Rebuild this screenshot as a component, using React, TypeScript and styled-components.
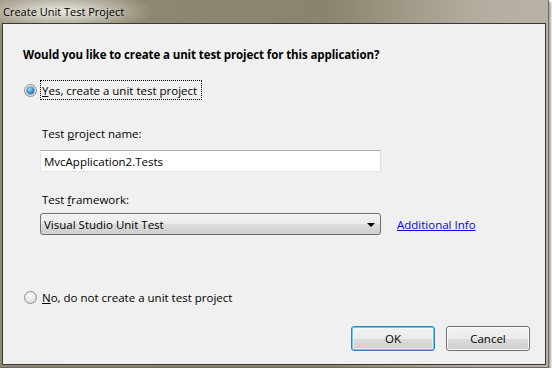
import React from 'react'
import styled, { createGlobalStyle } from 'styled-components'

const GlobalStyle = createGlobalStyle`
  html, body {
    margin: 0;
    padding: 0;
    background: #ffffff;
  }
  body {
    font-family: "Open Sans", "Noto Sans", sans-serif;
    font-size: 11.5px;
    color: #000;
  }
`

const Window = styled.div`
  width: 548px;
  height: 367px;
  display: flex;
  flex-direction: column;
  background:
    radial-gradient(ellipse 95px 22px at 60px 11px, rgba(236, 234, 226, 0.95), rgba(236, 234, 226, 0) 100%),
    linear-gradient(90deg, #8f8872 0%, #8a836d 60%, #a39d8c 76%, #b3ae9f 88%, #b7b2a5 100%);
  border-right: 1px solid #6e6a60;
  border-bottom: 1px solid #6e6a60;
  box-shadow: 2px 2px 2px rgba(0, 0, 0, 0.35);
`

const TitleBar = styled.div`
  height: 23px;
  display: flex;
  align-items: center;
  padding-left: 3px;
  flex-shrink: 0;
`

const TitleText = styled.span`
  font-size: 11px;
  color: #000;
  text-shadow: 0 0 6px rgba(255, 255, 255, 0.8);
`

const Client = styled.div`
  margin: 0 2px 0 2px;
  height: 342px;
  box-sizing: border-box;
  border: 1px solid #3a3a36;
  background: #f0f0f0;
  display: flex;
  flex-direction: column;
  padding: 23px 15px 0 20px;
`

const Heading = styled.div`
  font-weight: 700;
  height: 16px;
  line-height: 16px;
  letter-spacing: -0.1px;
`

const RadioRow = styled.div<{ $gap: number }>`
  display: flex;
  align-items: center;
  height: 20px;
  margin-top: ${(p) => p.$gap}px;
  padding-left: 1px;
`

const RadioDot = styled.span<{ $checked?: boolean }>`
  position: relative;
  width: 13px;
  height: 13px;
  box-sizing: border-box;
  border-radius: 50%;
  border: 1px solid #8e8f8f;
  background: radial-gradient(circle at 40% 35%, #fbfbfb 0%, #e4e4e4 60%, #cfcfcf 100%);
  flex-shrink: 0;
  &::after {
    content: '';
    display: ${(p) => (p.$checked ? 'block' : 'none')};
    position: absolute;
    left: 2px;
    top: 2px;
    width: 7px;
    height: 7px;
    border-radius: 50%;
    background: radial-gradient(circle at 40% 35%, #b6e4fb 0%, #3a9bd8 45%, #135b93 100%);
    box-shadow: 0 0 0 0.5px #1c5180;
  }
`

const RadioLabel = styled.span<{ $focused?: boolean }>`
  margin-left: 3px;
  height: 20px;
  box-sizing: border-box;
  display: flex;
  align-items: center;
  padding: 0 4px 0 1px;
  border: 1px dotted ${(p) => (p.$focused ? '#000' : 'transparent')};
`

const Accel = styled.span`
  text-decoration: underline;
`

const Section = styled.div`
  padding-left: 17px;
  display: flex;
  flex-direction: column;
`

const FieldLabel = styled.div<{ $gap: number }>`
  height: 16px;
  line-height: 16px;
  margin-top: ${(p) => p.$gap}px;
  padding-left: 2px;
`

const TextBox = styled.div`
  margin-top: 8px;
  width: 341px;
  height: 22px;
  box-sizing: border-box;
  background: #fff;
  border: 1px solid #e2e3ea;
  border-top-color: #abadb3;
  display: flex;
  align-items: center;
  padding-left: 3px;
`

const SelectRow = styled.div`
  margin-top: 5px;
  display: flex;
  align-items: center;
`

const DropDown = styled.div`
  width: 341px;
  height: 22px;
  box-sizing: border-box;
  border: 1px solid #707070;
  border-radius: 3px;
  background: linear-gradient(#f2f2f2 0%, #ebebeb 50%, #dddddd 51%, #cfcfcf 100%);
  display: flex;
  align-items: center;
  justify-content: space-between;
  padding: 0 5px 0 3px;
`

const Arrow = styled.span`
  width: 0;
  height: 0;
  border-left: 4px solid transparent;
  border-right: 4px solid transparent;
  border-top: 4px solid #000;
  margin-top: 2px;
`

const InfoLink = styled.a`
  margin-left: 16px;
  color: #0000ff;
  text-decoration: underline;
  cursor: pointer;
`

const Spacer = styled.div`
  flex: 1;
`

const ButtonRow = styled.div`
  display: flex;
  justify-content: flex-end;
  gap: 11px;
  margin-bottom: 13px;
`

const Button = styled.button<{ $default?: boolean }>`
  width: 84px;
  height: 25px;
  box-sizing: border-box;
  font-family: inherit;
  font-size: inherit;
  color: #000;
  border-radius: 3px;
  border: 1px solid ${(p) => (p.$default ? '#3c7fb1' : '#707070')};
  background: linear-gradient(#f2f2f2 0%, #ebebeb 50%, #dddddd 51%, #cfcfcf 100%);
  box-shadow: ${(p) =>
    p.$default ? 'inset 0 0 0 1px #48d8f8, inset 0 0 0 2px rgba(255,255,255,0.5)' : 'inset 0 0 0 1px #fcfcfc'};
  padding: 0;
`

export default function App() {
  return (
    <>
      <GlobalStyle />
      <Window>
        <TitleBar>
          <TitleText>Create Unit Test Project</TitleText>
        </TitleBar>
        <Client>
          <Heading>Would you like to create a unit test project for this application?</Heading>
          <RadioRow $gap={17}>
            <RadioDot $checked />
            <RadioLabel $focused>
              <Accel>Y</Accel>es, create a unit test project
            </RadioLabel>
          </RadioRow>
          <Section>
            <FieldLabel $gap={26}>
              Test <Accel>p</Accel>roject name:
            </FieldLabel>
            <TextBox>MvcApplication2.Tests</TextBox>
            <FieldLabel $gap={20}>
              Test <Accel>f</Accel>ramework:
            </FieldLabel>
            <SelectRow>
              <DropDown>
                <span>Visual Studio Unit Test</span>
                <Arrow />
              </DropDown>
              <InfoLink>Additional Info</InfoLink>
            </SelectRow>
          </Section>
          <RadioRow $gap={52}>
            <RadioDot />
            <RadioLabel>
              <Accel>N</Accel>o, do not create a unit test project
            </RadioLabel>
          </RadioRow>
          <Spacer />
          <ButtonRow>
            <Button $default>OK</Button>
            <Button>Cancel</Button>
          </ButtonRow>
        </Client>
      </Window>
    </>
  )
}
